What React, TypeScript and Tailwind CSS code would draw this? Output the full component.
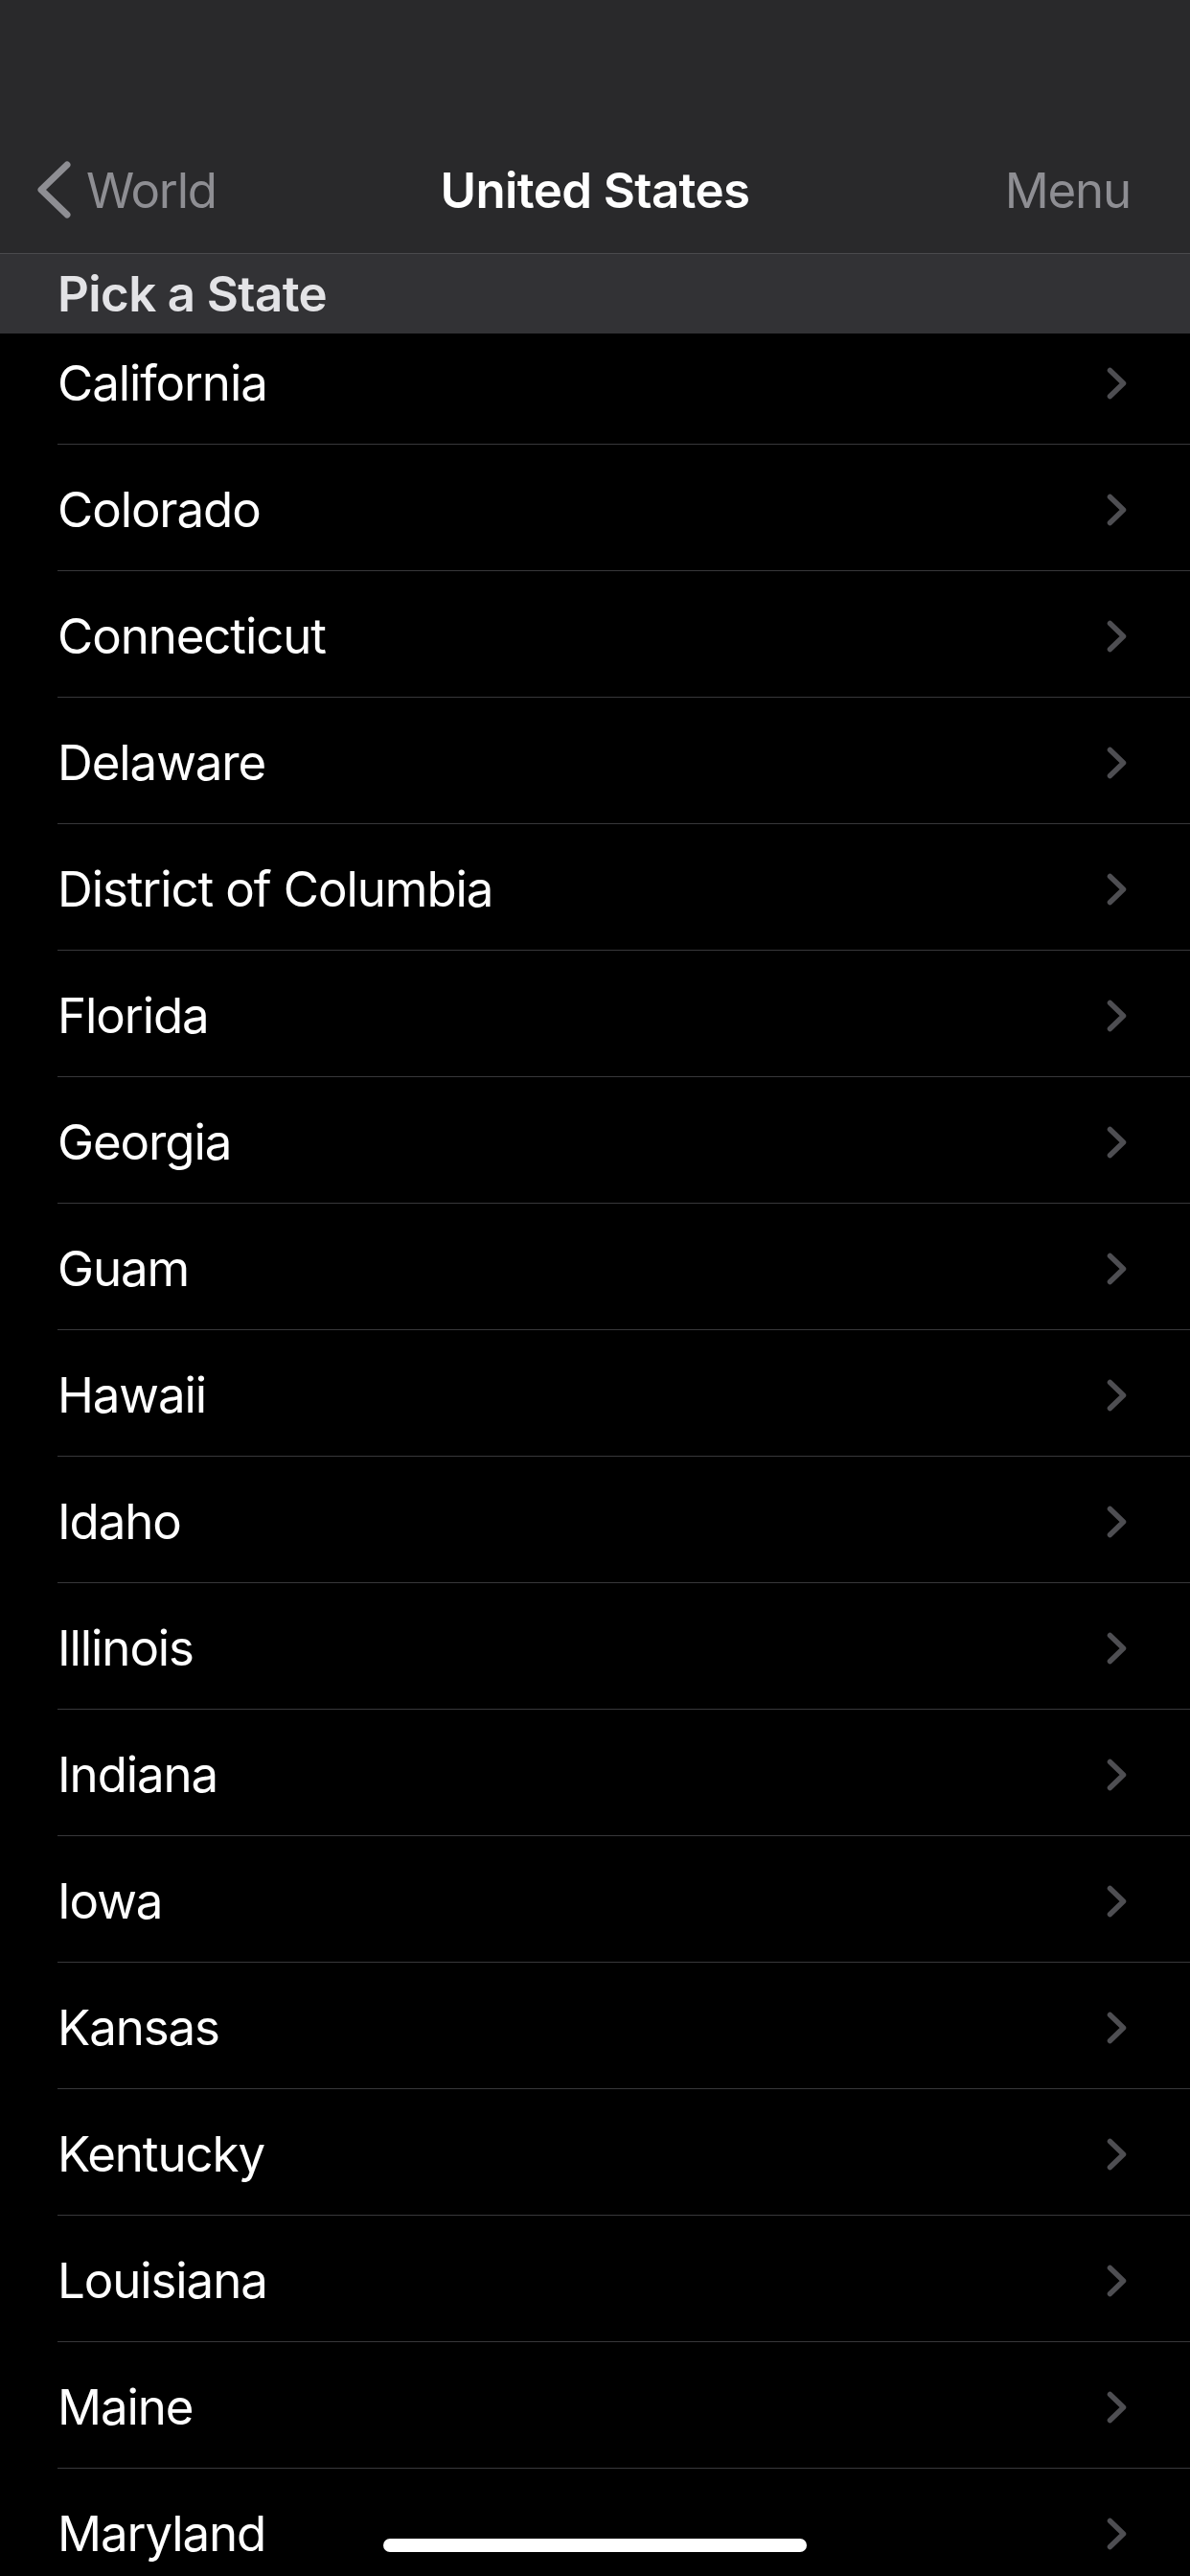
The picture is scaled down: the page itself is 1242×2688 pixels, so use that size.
import React from "react";

const states = [
  "California",
  "Colorado",
  "Connecticut",
  "Delaware",
  "District of Columbia",
  "Florida",
  "Georgia",
  "Guam",
  "Hawaii",
  "Idaho",
  "Illinois",
  "Indiana",
  "Iowa",
  "Kansas",
  "Kentucky",
  "Louisiana",
  "Maine",
  "Maryland",
];

function BackChevron() {
  return (
    <svg width="37" height="62" viewBox="0 0 37 62" fill="none" aria-hidden="true">
      <path
        d="M32 5 L5 31 L32 57"
        stroke="#8e8e93"
        strokeWidth="7"
        strokeLinecap="round"
        strokeLinejoin="round"
      />
    </svg>
  );
}

function RowChevron() {
  return (
    <svg width="21" height="34" viewBox="0 0 21 34" fill="none" aria-hidden="true">
      <path
        d="M3.5 3.5 L17.5 17 L3.5 30.5"
        stroke="#4e4e52"
        strokeWidth="5.5"
        strokeLinecap="round"
        strokeLinejoin="round"
      />
    </svg>
  );
}

export default function App() {
  return (
    <div className="relative h-[2688px] w-[1242px] overflow-hidden bg-black font-['Inter','Noto_Sans',sans-serif] text-white">
      {/* nav bar */}
      <header className="relative z-10 h-[265px] border-b border-[#4a4a4d] bg-[#29292b] pt-[154px]">
        <div className="grid h-[88px] grid-cols-[1fr_auto_1fr] items-center">
          <div className="flex items-center pl-[38px]">
            <BackChevron />
            <span className="ml-[15px] text-[51px] leading-none tracking-[-1.2px] text-[#8e8e93]">
              World
            </span>
          </div>
          <h1 className="text-[51px] font-semibold leading-none tracking-[-0.6px]">
            United States
          </h1>
          <div className="flex justify-end pr-[62px]">
            <span className="text-[51px] leading-none tracking-[-1.2px] text-[#8e8e93]">
              Menu
            </span>
          </div>
        </div>
      </header>

      {/* sticky section header */}
      <div className="relative z-10 flex h-[83px] items-center bg-[#323235] pl-[60px]">
        <span className="text-[51px] font-semibold leading-none tracking-[-0.6px] text-[#e3e3e6]">
          Pick a State
        </span>
      </div>

      <ul className="-mt-[16px]">
        {states.map((name) => (
          <li key={name} className="pl-[60px]">
            <div className="flex h-[132px] items-center justify-between border-b border-[#38383a] pr-[66px] pt-[4px]">
              <span className="text-[51px] leading-none tracking-[-1.1px]">{name}</span>
              <RowChevron />
            </div>
          </li>
        ))}
      </ul>

      {/* home indicator */}
      <div className="absolute bottom-[25px] left-[400px] h-[14px] w-[442px] rounded-full bg-white" />
    </div>
  );
}
